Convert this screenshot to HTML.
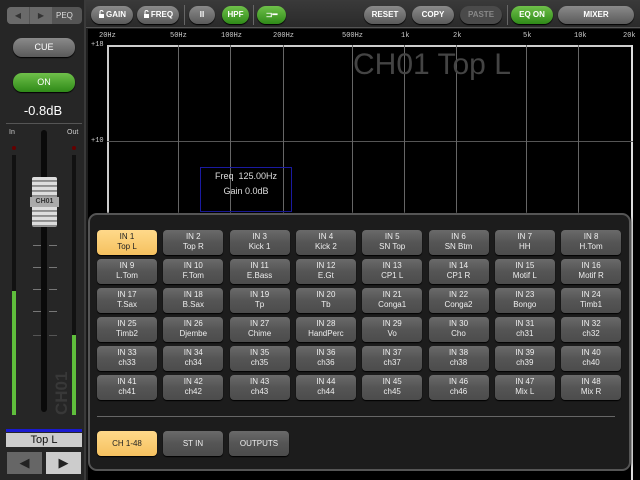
<!DOCTYPE html>
<html><head><style>
*{margin:0;padding:0;box-sizing:border-box}
body{width:640px;height:480px;background:#1e1e1e;position:relative;overflow:hidden;font-family:"Liberation Sans",sans-serif;color:#fff}
.a{position:absolute}
.btn{position:absolute;border-radius:9px;background:linear-gradient(#8a8a8a,#5a5a5a);color:#fff;font-size:8px;text-align:center;font-weight:bold;box-shadow:0 1px 1px #000}
.g{background:linear-gradient(#6fc04a,#2f8a18)}
.ch{position:absolute;width:60px;height:25px;border-radius:4px;background:linear-gradient(#6a6a6a,#555 50%,#4c4c4c);color:#eee;font-size:8px;line-height:10px;text-align:center;padding-top:2px;box-shadow:0 1px 1px #000}
.sel{background:linear-gradient(#ffd98a,#f5c15f);color:#222}
.vl{position:absolute;top:45px;width:1px;height:180px;background:#666}
.fl{position:absolute;top:32px;font-size:7px;color:#ccc;font-family:"Liberation Mono",monospace}
</style></head><body>
<div class="a" style="left:86px;top:0;width:554px;height:28px;background:linear-gradient(#3a3a3a,#2a2a2a);border-bottom:1px solid #555"></div>
<div class="a" style="left:0;top:0;width:86px;height:480px;background:#262626;border-right:2px solid #3a3a3a"></div>
<div class="a" style="left:7px;top:7px;width:75px;height:17px;border-radius:4px;background:#555"></div>
<div class="a" style="left:7px;top:7px;width:22px;height:17px;border-radius:4px 0 0 4px;background:#6a6a6a;color:#333;font-size:8px;text-align:center;line-height:17px">◀</div>
<div class="a" style="left:30px;top:7px;width:22px;height:17px;background:#6a6a6a;color:#333;font-size:8px;text-align:center;line-height:17px">▶</div>
<div class="a" style="left:56px;top:7px;font-size:8px;line-height:17px;color:#ddd">PEQ</div>
<div class="btn" style="left:91px;top:6px;width:42px;height:18px;line-height:18px"><svg width="8" height="8" viewBox="0 0 8 8" style="vertical-align:-1px"><path d="M1 4h5v4H1z" fill="#fff"/><path d="M2 4V2a1.5 1.5 0 0 1 3 0" stroke="#fff" fill="none"/></svg>GAIN</div>
<div class="btn" style="left:137px;top:6px;width:42px;height:18px;line-height:18px"><svg width="8" height="8" viewBox="0 0 8 8" style="vertical-align:-1px"><path d="M1 4h5v4H1z" fill="#fff"/><path d="M2 4V2a1.5 1.5 0 0 1 3 0" stroke="#fff" fill="none"/></svg>FREQ</div>
<div class="a" style="left:184px;top:5px;width:1px;height:20px;background:#666"></div>
<div class="btn" style="left:189px;top:6px;width:26px;height:18px;line-height:18px">II</div>
<div class="btn g" style="left:222px;top:6px;width:27px;height:18px;line-height:18px">HPF</div>
<div class="a" style="left:253px;top:5px;width:1px;height:20px;background:#666"></div>
<div class="btn g" style="left:257px;top:6px;width:29px;height:18px;line-height:18px">⊐━</div>
<div class="btn" style="left:364px;top:6px;width:42px;height:18px;line-height:18px">RESET</div>
<div class="btn" style="left:412px;top:6px;width:42px;height:18px;line-height:18px">COPY</div>
<div class="btn" style="left:460px;top:6px;width:42px;height:18px;line-height:18px;background:#4a4a4a;color:#888">PASTE</div>
<div class="a" style="left:507px;top:5px;width:1px;height:20px;background:#666"></div>
<div class="btn g" style="left:511px;top:6px;width:42px;height:18px;line-height:18px">EQ ON</div>
<div class="btn" style="left:558px;top:6px;width:76px;height:18px;line-height:18px">MIXER</div>
<div class="a" style="left:88px;top:29px;width:552px;height:451px;background:#000"></div>
<div class="a" style="left:107px;top:45px;width:526px;height:2px;background:#ccc"></div>
<div class="a" style="left:107px;top:45px;width:2px;height:180px;background:#ccc"></div>
<div class="a" style="left:631px;top:45px;width:2px;height:435px;background:#ddd"></div>
<div class="a" style="left:107px;top:141px;width:526px;height:1px;background:#555"></div>
<div class="vl" style="left:178px"></div><div class="vl" style="left:230px"></div><div class="vl" style="left:283px"></div><div class="vl" style="left:352px"></div><div class="vl" style="left:404px"></div><div class="vl" style="left:456px"></div><div class="vl" style="left:526px"></div><div class="vl" style="left:578px"></div>
<div class="fl" style="left:99px">20Hz</div><div class="fl" style="left:170px">50Hz</div><div class="fl" style="left:221px">100Hz</div><div class="fl" style="left:273px">200Hz</div><div class="fl" style="left:342px">500Hz</div><div class="fl" style="left:401px">1k</div><div class="fl" style="left:453px">2k</div><div class="fl" style="left:523px">5k</div><div class="fl" style="left:574px">10k</div><div class="fl" style="left:623px">20k</div>
<div class="fl" style="left:91px;top:41px">+18</div><div class="fl" style="left:91px;top:137px">+10</div>
<div class="a" style="left:353px;top:48px;font-size:30px;color:#444">CH01 Top L</div>
<div class="a" style="left:200px;top:167px;width:92px;height:45px;border:1px solid #1a1aa0;font-size:9px;color:#ddd;text-align:center;line-height:15px;padding-top:1px">Freq&nbsp; 125.00Hz<br>Gain 0.0dB</div>
<div class="a" style="left:88px;top:213px;width:543px;height:258px;border-radius:9px;background:#1c1c1c;border:2px solid #555;box-shadow:0 0 2px #000"></div>
<div class="a" style="left:97px;top:416px;width:518px;height:1px;background:#666"></div>
<div id="grid"></div>
<div class="ch sel" style="left:97px;top:431px;height:25px;line-height:21px">CH 1-48</div>
<div class="ch" style="left:163px;top:431px;line-height:21px">ST IN</div>
<div class="ch" style="left:229px;top:431px;line-height:21px">OUTPUTS</div>
<div class="btn" style="left:13px;top:38px;width:62px;height:19px;line-height:19px;font-size:9px;font-weight:normal">CUE</div>
<div class="btn g" style="left:13px;top:73px;width:62px;height:19px;line-height:19px;font-size:9px;font-weight:normal">ON</div>
<div class="a" style="left:0;top:103px;width:86px;text-align:center;font-size:13px">-0.8dB</div>
<div class="a" style="left:6px;top:123px;width:76px;height:1px;background:#555"></div>
<div class="a" style="left:9px;top:129px;font-size:7px;color:#ccc">In</div>
<div class="a" style="left:67px;top:129px;font-size:7px;color:#ccc">Out</div>
<div class="a" style="left:12px;top:146px;width:4px;height:4px;border-radius:2px;background:#600"></div>
<div class="a" style="left:72px;top:146px;width:4px;height:4px;border-radius:2px;background:#600"></div>
<div class="a" style="left:12px;top:155px;width:4px;height:260px;background:#111"></div>
<div class="a" style="left:72px;top:155px;width:4px;height:260px;background:#111"></div>
<div class="a" style="left:12px;top:291px;width:4px;height:124px;background:#5fbe3c"></div>
<div class="a" style="left:72px;top:335px;width:4px;height:80px;background:#5fbe3c"></div>
<div class="a" style="left:41px;top:130px;width:6px;height:282px;border-radius:3px;background:#0a0a0a"></div>
<div class="a" style="left:33px;top:245px;width:8px;height:1px;background:#777;box-shadow:0 22px 0 #777,0 44px 0 #777,0 -22px 0 #777,0 66px 0 #777,0 90px 0 #555"></div>
<div class="a" style="left:49px;top:245px;width:8px;height:1px;background:#777;box-shadow:0 22px 0 #777,0 44px 0 #777,0 -22px 0 #777,0 66px 0 #777,0 90px 0 #555"></div>
<div class="a" style="left:32px;top:177px;width:25px;height:50px;border-radius:2px;background:repeating-linear-gradient(#ddd 0,#ddd 3px,#888 3px,#999 5px)"></div>
<div class="a" style="left:30px;top:197px;width:29px;height:10px;background:#aaa;color:#333;font-size:7px;text-align:center;line-height:10px;font-weight:bold">CH01</div>
<div class="a" style="left:52px;top:415px;transform:rotate(-90deg);transform-origin:left top;font-size:17px;font-weight:bold;color:#383838">CH01</div>
<div class="a" style="left:6px;top:429px;width:76px;height:3px;background:#1a1ad0"></div>
<div class="a" style="left:6px;top:433px;width:76px;height:14px;background:#ccc;color:#111;font-size:11px;text-align:center;line-height:14px">Top L</div>
<div class="a" style="left:7px;top:452px;width:35px;height:22px;background:#666;color:#222;text-align:center;line-height:22px;font-size:13px">◀</div>
<div class="a" style="left:46px;top:452px;width:35px;height:22px;background:#ccc;color:#222;text-align:center;line-height:22px;font-size:13px">▶</div>
<script>
var n=["Top L","Top R","Kick 1","Kick 2","SN Top","SN Btm","HH","H.Tom","L.Tom","F.Tom","E.Bass","E.Gt","CP1 L","CP1 R","Motif L","Motif R","T.Sax","B.Sax","Tp","Tb","Conga1","Conga2","Bongo","Timb1","Timb2","Djembe","Chime","HandPerc","Vo","Cho","ch31","ch32"];
for(var i=33;i<=46;i++)n.push("ch"+i);n.push("Mix L","Mix R");
var h="";for(var i=0;i<48;i++){var c=i%8,r=Math.floor(i/8);
h+='<div class="ch'+(i==0?' sel':'')+'" style="left:'+(97+c*66.3)+'px;top:'+(230+r*29)+'px">IN '+(i+1)+'<br>'+n[i]+'</div>';}
document.getElementById("grid").outerHTML=h;
</script>
</body></html>
